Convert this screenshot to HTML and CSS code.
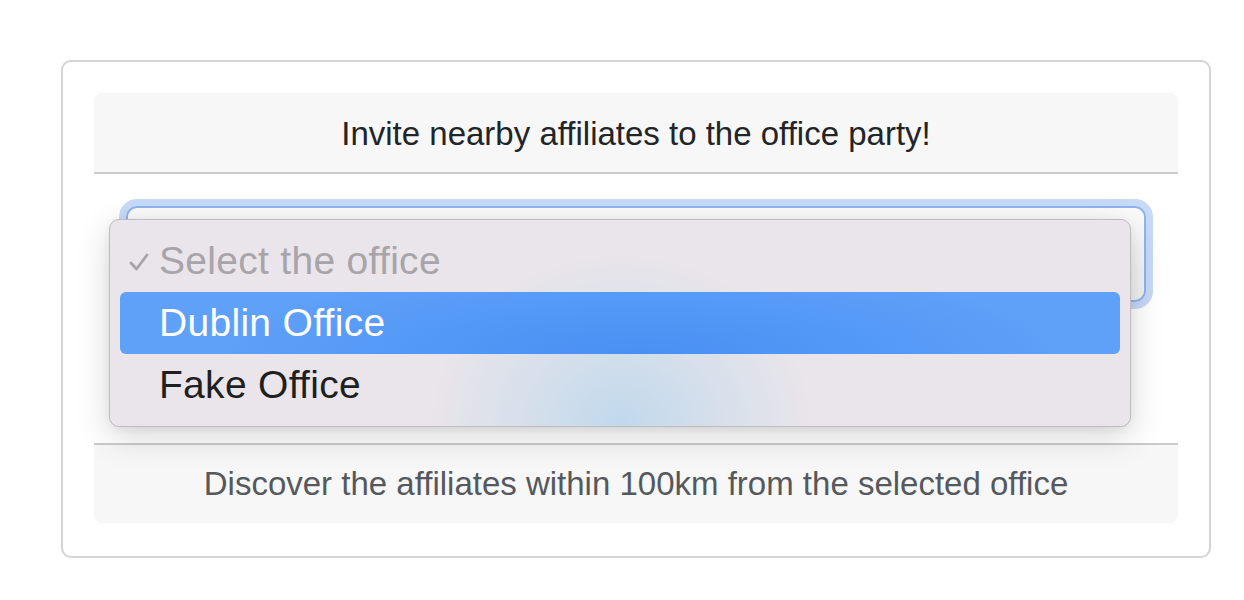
FILE: index.html
```html
<!DOCTYPE html>
<html>
<head>
<meta charset="utf-8">
<link rel="stylesheet" href="styles.css">
</head>
<body>
<div class="frame">
  <div class="card">
    <div class="card-header">Invite nearby affiliates to the office party!</div>
    <div class="card-body">
      <div class="select-wrap">
        <div class="select"></div>
        <div class="menu">
          <div class="item disabled">
            <svg class="check" width="22" height="22" viewBox="0 0 22 22"><path d="M3 12 L8.5 18 L19 4" fill="none" stroke="#a6a2a7" stroke-width="2.8" stroke-linecap="round" stroke-linejoin="round"/></svg>
            <span>Select the office</span>
          </div>
          <div class="item active"><span>Dublin Office</span></div>
          <div class="item"><span>Fake Office</span></div>
        </div>
      </div>
    </div>
    <div class="card-footer">Discover the affiliates within 100km from the selected office</div>
  </div>
</div>
</body>
</html>
```

FILE: styles.css
```css
html, body {
  margin: 0;
  padding: 0;
  background: #ffffff;
  font-family: "Liberation Sans", Arial, sans-serif;
}

body {
  padding: 60px 0 0 61px;
}

.frame {
  width: 1084px;
  padding: 31px 31px 33px;
  border: 2px solid #d4d4d4;
  border-radius: 10px;
}

.card {
  border-radius: 8px;
  background: #ffffff;
}

.card-header {
  background: #f7f7f7;
  border-radius: 8px 8px 0 0;
  border-bottom: 2px solid #cbcbcb;
  display: flex;
  align-items: center;
  justify-content: center;
  font-size: 33px;
  color: #212529;
  padding-top: 2px;
  box-sizing: border-box;
  height: 81px;
}

.card-body {
  padding: 32px;
  height: 205px;
}

.select-wrap {
  position: relative;
}

.select {
  height: 92px;
  border: 2px solid #8db4ef;
  border-radius: 11px;
  background: linear-gradient(#fbfbfb, #f1f1f1);
  box-shadow: 0 0 0 7px #c6d9f7;
}

.menu {
  position: absolute;
  left: -17px;
  top: 13px;
  width: 1000px;
  padding: 10px;
  border: 1px solid #bebcbf;
  border-radius: 10px;
  background:
    radial-gradient(ellipse 190px 170px at 511px 205px, rgba(190, 216, 236, 0.95) 0%, rgba(202, 220, 236, 0.7) 45%, rgba(233, 229, 234, 0) 100%),
    #e9e5ea;
  box-shadow: 0 10px 34px rgba(0, 0, 0, 0.16), 0 2px 8px rgba(0, 0, 0, 0.06);
}

.item {
  height: 62px;
  display: flex;
  align-items: center;
  padding-left: 39px;
  font-size: 39px;
  letter-spacing: 0.3px;
  color: #1f1f1f;
  border-radius: 6px;
  position: relative;
}

.item.disabled {
  color: #a8a4a9;
}

.check {
  position: absolute;
  left: 8px;
  top: 21px;
}

.item.active {
  color: #ffffff;
  background: radial-gradient(ellipse 420px 90px at 52% 100%, #4a8ff3 0%, #5399f6 55%, #5fa0f8 100%);
}

.card-footer {
  background: #f7f7f7;
  border-top: 2px solid #cbcbcb;
  border-radius: 0 0 8px 8px;
  height: 78px;
  display: flex;
  align-items: center;
  justify-content: center;
  font-size: 33px;
  color: #55595e;
}
```
